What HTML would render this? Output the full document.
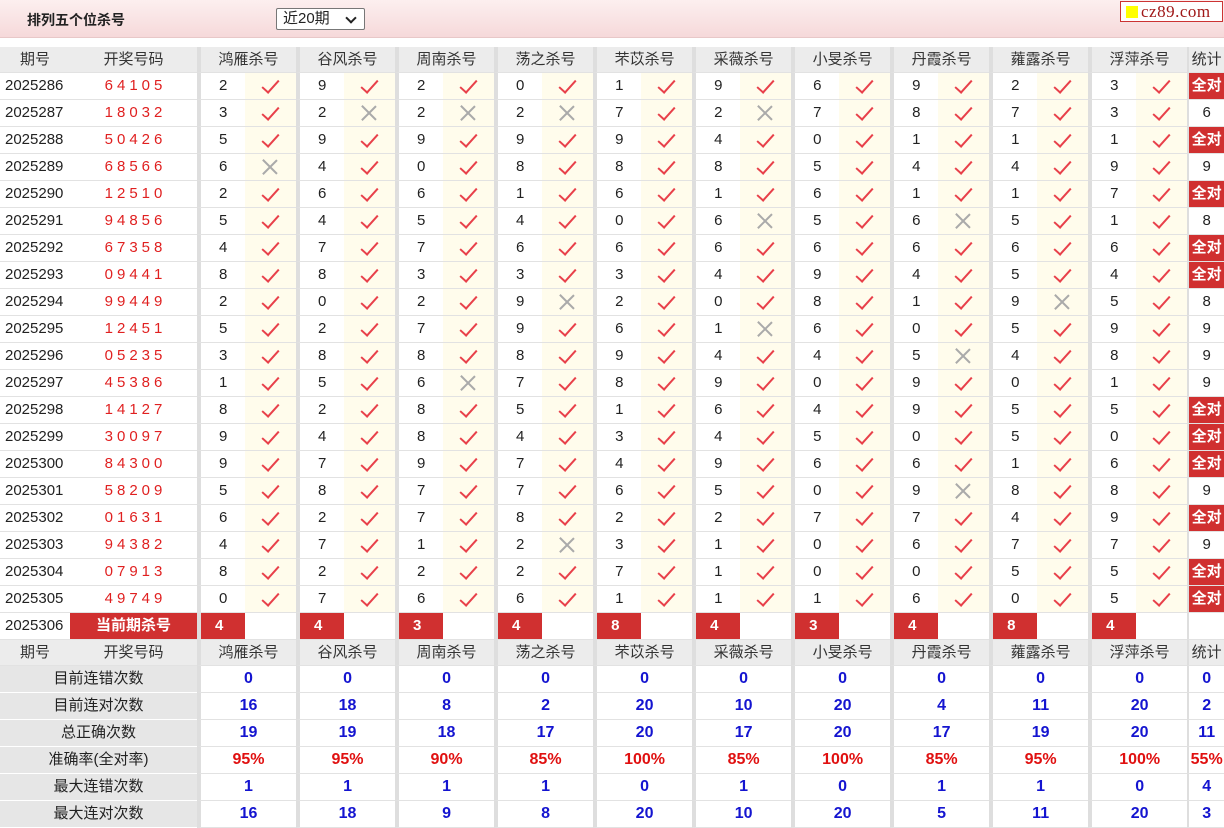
<!DOCTYPE html>
<html><head><meta charset="utf-8"><style>
*{margin:0;padding:0;box-sizing:border-box}
body{width:1224px;height:828px;overflow:hidden;background:#fff;font-family:"Liberation Sans","Noto Sans CJK SC",sans-serif;font-size:15px;color:#222;position:relative}
.bar{position:absolute;left:0;top:0;width:1224px;height:38px;background:linear-gradient(#fcefef,#f6d9da);border-bottom:1px solid #e8c8c8}
.tt{position:absolute;left:27px;top:10px;font-weight:bold;font-size:14px;color:#222}
.sel{position:absolute;left:276px;top:8px;width:89px;height:22px;border:1px solid #777;border-radius:2px;background:#fff;font-size:15px;padding-left:6px;line-height:20px}
.sel:after{content:"";position:absolute;right:9px;top:5px;width:6px;height:6px;border-right:2px solid #222;border-bottom:2px solid #222;transform:rotate(45deg)}
.logo{position:absolute;left:1120px;top:1px;width:103px;height:21px;border:1px solid #c33;background:#fff;font-family:"Liberation Serif",serif;font-size:17px;color:#a01818;line-height:19px;padding-left:20px;letter-spacing:.5px}
.logo:before{content:"";position:absolute;left:5px;top:4px;width:12px;height:12px;background:#ff0}
table{position:absolute;left:0;top:47px;border-collapse:separate;border-spacing:0;table-layout:fixed;width:1224px}
tr{height:27px}
tr.h{height:26px}
td{height:27px;border-bottom:1px solid #e2e2e2;text-align:center;white-space:nowrap;overflow:hidden;padding:0;line-height:26px}
tr.h td{background:#ececec;height:26px;color:#333;line-height:25px}
td.p{text-align:left;padding-left:5px}
tr.h td.p{text-align:center;padding:0}
td.k{color:#e02020;letter-spacing:4px;font-size:15px;padding-left:4px}
td.n{border-left:4px solid #dedede;text-align:left;padding-left:18px}
tr.h td.n{text-align:center;padding:0}
td.c{background:#fffcec;position:relative}
td.s{border-left:2px solid #dedede}
td.a{background:#d03030;color:#fff;font-weight:bold}
.y{position:absolute;left:21px;top:3px;width:9px;height:17px;border-right:2px solid #e8404a;border-bottom:2px solid #e8404a;transform:rotate(42deg)}
.x{position:absolute;left:17px;top:5px;width:16px;height:16px}
.x:before,.x:after{content:"";position:absolute;left:7px;top:-2px;width:1.5px;height:20px;background:#aaa;transform:rotate(45deg)}
.x:after{transform:rotate(-45deg)}
td.r{background:#d03030;color:#fff;font-weight:bold;text-align:left;padding-left:14px}
td.cu{background:#d03030;color:#fff;font-weight:bold;font-size:15px}
td.l{background:#e6e6e6;border-bottom:1px solid #fff}
td.v{border-left:4px solid #dedede;color:#1414d0;font-weight:bold;font-size:16px}
td.v.s{border-left:2px solid #dedede}
td.pc{color:#e01010}
</style></head><body>
<div class="bar"><div class="tt">排列五个位杀号</div><div class="sel">近20期</div><div class="logo">cz89.com</div></div>
<table>
<colgroup><col style="width:70px"><col style="width:127px">
<col style="width:48px"><col style="width:51px"><col style="width:48px"><col style="width:51px"><col style="width:48px"><col style="width:51px"><col style="width:48px"><col style="width:51px"><col style="width:48px"><col style="width:51px"><col style="width:48px"><col style="width:51px"><col style="width:48px"><col style="width:51px"><col style="width:48px"><col style="width:51px"><col style="width:48px"><col style="width:51px"><col style="width:48px"><col style="width:51px"><col style="width:37px"></colgroup>
<tr class="h"><td class="p">期号</td><td>开奖号码</td><td class="n" colspan="2">鸿雁杀号</td><td class="n" colspan="2">谷风杀号</td><td class="n" colspan="2">周南杀号</td><td class="n" colspan="2">荡之杀号</td><td class="n" colspan="2">芣苡杀号</td><td class="n" colspan="2">采薇杀号</td><td class="n" colspan="2">小旻杀号</td><td class="n" colspan="2">丹霞杀号</td><td class="n" colspan="2">蕹露杀号</td><td class="n" colspan="2">浮萍杀号</td><td class="s">统计</td></tr>
<tr><td class="p">2025286</td><td class="k">64105</td><td class="n">2</td><td class="c"><i class="y"></i></td><td class="n">9</td><td class="c"><i class="y"></i></td><td class="n">2</td><td class="c"><i class="y"></i></td><td class="n">0</td><td class="c"><i class="y"></i></td><td class="n">1</td><td class="c"><i class="y"></i></td><td class="n">9</td><td class="c"><i class="y"></i></td><td class="n">6</td><td class="c"><i class="y"></i></td><td class="n">9</td><td class="c"><i class="y"></i></td><td class="n">2</td><td class="c"><i class="y"></i></td><td class="n">3</td><td class="c"><i class="y"></i></td><td class="s a">全对</td></tr>
<tr><td class="p">2025287</td><td class="k">18032</td><td class="n">3</td><td class="c"><i class="y"></i></td><td class="n">2</td><td class="c"><i class="x"></i></td><td class="n">2</td><td class="c"><i class="x"></i></td><td class="n">2</td><td class="c"><i class="x"></i></td><td class="n">7</td><td class="c"><i class="y"></i></td><td class="n">2</td><td class="c"><i class="x"></i></td><td class="n">7</td><td class="c"><i class="y"></i></td><td class="n">8</td><td class="c"><i class="y"></i></td><td class="n">7</td><td class="c"><i class="y"></i></td><td class="n">3</td><td class="c"><i class="y"></i></td><td class="s">6</td></tr>
<tr><td class="p">2025288</td><td class="k">50426</td><td class="n">5</td><td class="c"><i class="y"></i></td><td class="n">9</td><td class="c"><i class="y"></i></td><td class="n">9</td><td class="c"><i class="y"></i></td><td class="n">9</td><td class="c"><i class="y"></i></td><td class="n">9</td><td class="c"><i class="y"></i></td><td class="n">4</td><td class="c"><i class="y"></i></td><td class="n">0</td><td class="c"><i class="y"></i></td><td class="n">1</td><td class="c"><i class="y"></i></td><td class="n">1</td><td class="c"><i class="y"></i></td><td class="n">1</td><td class="c"><i class="y"></i></td><td class="s a">全对</td></tr>
<tr><td class="p">2025289</td><td class="k">68566</td><td class="n">6</td><td class="c"><i class="x"></i></td><td class="n">4</td><td class="c"><i class="y"></i></td><td class="n">0</td><td class="c"><i class="y"></i></td><td class="n">8</td><td class="c"><i class="y"></i></td><td class="n">8</td><td class="c"><i class="y"></i></td><td class="n">8</td><td class="c"><i class="y"></i></td><td class="n">5</td><td class="c"><i class="y"></i></td><td class="n">4</td><td class="c"><i class="y"></i></td><td class="n">4</td><td class="c"><i class="y"></i></td><td class="n">9</td><td class="c"><i class="y"></i></td><td class="s">9</td></tr>
<tr><td class="p">2025290</td><td class="k">12510</td><td class="n">2</td><td class="c"><i class="y"></i></td><td class="n">6</td><td class="c"><i class="y"></i></td><td class="n">6</td><td class="c"><i class="y"></i></td><td class="n">1</td><td class="c"><i class="y"></i></td><td class="n">6</td><td class="c"><i class="y"></i></td><td class="n">1</td><td class="c"><i class="y"></i></td><td class="n">6</td><td class="c"><i class="y"></i></td><td class="n">1</td><td class="c"><i class="y"></i></td><td class="n">1</td><td class="c"><i class="y"></i></td><td class="n">7</td><td class="c"><i class="y"></i></td><td class="s a">全对</td></tr>
<tr><td class="p">2025291</td><td class="k">94856</td><td class="n">5</td><td class="c"><i class="y"></i></td><td class="n">4</td><td class="c"><i class="y"></i></td><td class="n">5</td><td class="c"><i class="y"></i></td><td class="n">4</td><td class="c"><i class="y"></i></td><td class="n">0</td><td class="c"><i class="y"></i></td><td class="n">6</td><td class="c"><i class="x"></i></td><td class="n">5</td><td class="c"><i class="y"></i></td><td class="n">6</td><td class="c"><i class="x"></i></td><td class="n">5</td><td class="c"><i class="y"></i></td><td class="n">1</td><td class="c"><i class="y"></i></td><td class="s">8</td></tr>
<tr><td class="p">2025292</td><td class="k">67358</td><td class="n">4</td><td class="c"><i class="y"></i></td><td class="n">7</td><td class="c"><i class="y"></i></td><td class="n">7</td><td class="c"><i class="y"></i></td><td class="n">6</td><td class="c"><i class="y"></i></td><td class="n">6</td><td class="c"><i class="y"></i></td><td class="n">6</td><td class="c"><i class="y"></i></td><td class="n">6</td><td class="c"><i class="y"></i></td><td class="n">6</td><td class="c"><i class="y"></i></td><td class="n">6</td><td class="c"><i class="y"></i></td><td class="n">6</td><td class="c"><i class="y"></i></td><td class="s a">全对</td></tr>
<tr><td class="p">2025293</td><td class="k">09441</td><td class="n">8</td><td class="c"><i class="y"></i></td><td class="n">8</td><td class="c"><i class="y"></i></td><td class="n">3</td><td class="c"><i class="y"></i></td><td class="n">3</td><td class="c"><i class="y"></i></td><td class="n">3</td><td class="c"><i class="y"></i></td><td class="n">4</td><td class="c"><i class="y"></i></td><td class="n">9</td><td class="c"><i class="y"></i></td><td class="n">4</td><td class="c"><i class="y"></i></td><td class="n">5</td><td class="c"><i class="y"></i></td><td class="n">4</td><td class="c"><i class="y"></i></td><td class="s a">全对</td></tr>
<tr><td class="p">2025294</td><td class="k">99449</td><td class="n">2</td><td class="c"><i class="y"></i></td><td class="n">0</td><td class="c"><i class="y"></i></td><td class="n">2</td><td class="c"><i class="y"></i></td><td class="n">9</td><td class="c"><i class="x"></i></td><td class="n">2</td><td class="c"><i class="y"></i></td><td class="n">0</td><td class="c"><i class="y"></i></td><td class="n">8</td><td class="c"><i class="y"></i></td><td class="n">1</td><td class="c"><i class="y"></i></td><td class="n">9</td><td class="c"><i class="x"></i></td><td class="n">5</td><td class="c"><i class="y"></i></td><td class="s">8</td></tr>
<tr><td class="p">2025295</td><td class="k">12451</td><td class="n">5</td><td class="c"><i class="y"></i></td><td class="n">2</td><td class="c"><i class="y"></i></td><td class="n">7</td><td class="c"><i class="y"></i></td><td class="n">9</td><td class="c"><i class="y"></i></td><td class="n">6</td><td class="c"><i class="y"></i></td><td class="n">1</td><td class="c"><i class="x"></i></td><td class="n">6</td><td class="c"><i class="y"></i></td><td class="n">0</td><td class="c"><i class="y"></i></td><td class="n">5</td><td class="c"><i class="y"></i></td><td class="n">9</td><td class="c"><i class="y"></i></td><td class="s">9</td></tr>
<tr><td class="p">2025296</td><td class="k">05235</td><td class="n">3</td><td class="c"><i class="y"></i></td><td class="n">8</td><td class="c"><i class="y"></i></td><td class="n">8</td><td class="c"><i class="y"></i></td><td class="n">8</td><td class="c"><i class="y"></i></td><td class="n">9</td><td class="c"><i class="y"></i></td><td class="n">4</td><td class="c"><i class="y"></i></td><td class="n">4</td><td class="c"><i class="y"></i></td><td class="n">5</td><td class="c"><i class="x"></i></td><td class="n">4</td><td class="c"><i class="y"></i></td><td class="n">8</td><td class="c"><i class="y"></i></td><td class="s">9</td></tr>
<tr><td class="p">2025297</td><td class="k">45386</td><td class="n">1</td><td class="c"><i class="y"></i></td><td class="n">5</td><td class="c"><i class="y"></i></td><td class="n">6</td><td class="c"><i class="x"></i></td><td class="n">7</td><td class="c"><i class="y"></i></td><td class="n">8</td><td class="c"><i class="y"></i></td><td class="n">9</td><td class="c"><i class="y"></i></td><td class="n">0</td><td class="c"><i class="y"></i></td><td class="n">9</td><td class="c"><i class="y"></i></td><td class="n">0</td><td class="c"><i class="y"></i></td><td class="n">1</td><td class="c"><i class="y"></i></td><td class="s">9</td></tr>
<tr><td class="p">2025298</td><td class="k">14127</td><td class="n">8</td><td class="c"><i class="y"></i></td><td class="n">2</td><td class="c"><i class="y"></i></td><td class="n">8</td><td class="c"><i class="y"></i></td><td class="n">5</td><td class="c"><i class="y"></i></td><td class="n">1</td><td class="c"><i class="y"></i></td><td class="n">6</td><td class="c"><i class="y"></i></td><td class="n">4</td><td class="c"><i class="y"></i></td><td class="n">9</td><td class="c"><i class="y"></i></td><td class="n">5</td><td class="c"><i class="y"></i></td><td class="n">5</td><td class="c"><i class="y"></i></td><td class="s a">全对</td></tr>
<tr><td class="p">2025299</td><td class="k">30097</td><td class="n">9</td><td class="c"><i class="y"></i></td><td class="n">4</td><td class="c"><i class="y"></i></td><td class="n">8</td><td class="c"><i class="y"></i></td><td class="n">4</td><td class="c"><i class="y"></i></td><td class="n">3</td><td class="c"><i class="y"></i></td><td class="n">4</td><td class="c"><i class="y"></i></td><td class="n">5</td><td class="c"><i class="y"></i></td><td class="n">0</td><td class="c"><i class="y"></i></td><td class="n">5</td><td class="c"><i class="y"></i></td><td class="n">0</td><td class="c"><i class="y"></i></td><td class="s a">全对</td></tr>
<tr><td class="p">2025300</td><td class="k">84300</td><td class="n">9</td><td class="c"><i class="y"></i></td><td class="n">7</td><td class="c"><i class="y"></i></td><td class="n">9</td><td class="c"><i class="y"></i></td><td class="n">7</td><td class="c"><i class="y"></i></td><td class="n">4</td><td class="c"><i class="y"></i></td><td class="n">9</td><td class="c"><i class="y"></i></td><td class="n">6</td><td class="c"><i class="y"></i></td><td class="n">6</td><td class="c"><i class="y"></i></td><td class="n">1</td><td class="c"><i class="y"></i></td><td class="n">6</td><td class="c"><i class="y"></i></td><td class="s a">全对</td></tr>
<tr><td class="p">2025301</td><td class="k">58209</td><td class="n">5</td><td class="c"><i class="y"></i></td><td class="n">8</td><td class="c"><i class="y"></i></td><td class="n">7</td><td class="c"><i class="y"></i></td><td class="n">7</td><td class="c"><i class="y"></i></td><td class="n">6</td><td class="c"><i class="y"></i></td><td class="n">5</td><td class="c"><i class="y"></i></td><td class="n">0</td><td class="c"><i class="y"></i></td><td class="n">9</td><td class="c"><i class="x"></i></td><td class="n">8</td><td class="c"><i class="y"></i></td><td class="n">8</td><td class="c"><i class="y"></i></td><td class="s">9</td></tr>
<tr><td class="p">2025302</td><td class="k">01631</td><td class="n">6</td><td class="c"><i class="y"></i></td><td class="n">2</td><td class="c"><i class="y"></i></td><td class="n">7</td><td class="c"><i class="y"></i></td><td class="n">8</td><td class="c"><i class="y"></i></td><td class="n">2</td><td class="c"><i class="y"></i></td><td class="n">2</td><td class="c"><i class="y"></i></td><td class="n">7</td><td class="c"><i class="y"></i></td><td class="n">7</td><td class="c"><i class="y"></i></td><td class="n">4</td><td class="c"><i class="y"></i></td><td class="n">9</td><td class="c"><i class="y"></i></td><td class="s a">全对</td></tr>
<tr><td class="p">2025303</td><td class="k">94382</td><td class="n">4</td><td class="c"><i class="y"></i></td><td class="n">7</td><td class="c"><i class="y"></i></td><td class="n">1</td><td class="c"><i class="y"></i></td><td class="n">2</td><td class="c"><i class="x"></i></td><td class="n">3</td><td class="c"><i class="y"></i></td><td class="n">1</td><td class="c"><i class="y"></i></td><td class="n">0</td><td class="c"><i class="y"></i></td><td class="n">6</td><td class="c"><i class="y"></i></td><td class="n">7</td><td class="c"><i class="y"></i></td><td class="n">7</td><td class="c"><i class="y"></i></td><td class="s">9</td></tr>
<tr><td class="p">2025304</td><td class="k">07913</td><td class="n">8</td><td class="c"><i class="y"></i></td><td class="n">2</td><td class="c"><i class="y"></i></td><td class="n">2</td><td class="c"><i class="y"></i></td><td class="n">2</td><td class="c"><i class="y"></i></td><td class="n">7</td><td class="c"><i class="y"></i></td><td class="n">1</td><td class="c"><i class="y"></i></td><td class="n">0</td><td class="c"><i class="y"></i></td><td class="n">0</td><td class="c"><i class="y"></i></td><td class="n">5</td><td class="c"><i class="y"></i></td><td class="n">5</td><td class="c"><i class="y"></i></td><td class="s a">全对</td></tr>
<tr><td class="p">2025305</td><td class="k">49749</td><td class="n">0</td><td class="c"><i class="y"></i></td><td class="n">7</td><td class="c"><i class="y"></i></td><td class="n">6</td><td class="c"><i class="y"></i></td><td class="n">6</td><td class="c"><i class="y"></i></td><td class="n">1</td><td class="c"><i class="y"></i></td><td class="n">1</td><td class="c"><i class="y"></i></td><td class="n">1</td><td class="c"><i class="y"></i></td><td class="n">6</td><td class="c"><i class="y"></i></td><td class="n">0</td><td class="c"><i class="y"></i></td><td class="n">5</td><td class="c"><i class="y"></i></td><td class="s a">全对</td></tr>
<tr><td class="p">2025306</td><td class="cu">当前期杀号</td><td class="n r">4</td><td></td><td class="n r">4</td><td></td><td class="n r">3</td><td></td><td class="n r">4</td><td></td><td class="n r">8</td><td></td><td class="n r">4</td><td></td><td class="n r">3</td><td></td><td class="n r">4</td><td></td><td class="n r">8</td><td></td><td class="n r">4</td><td></td><td class="s"></td></tr>
<tr class="h"><td class="p">期号</td><td>开奖号码</td><td class="n" colspan="2">鸿雁杀号</td><td class="n" colspan="2">谷风杀号</td><td class="n" colspan="2">周南杀号</td><td class="n" colspan="2">荡之杀号</td><td class="n" colspan="2">芣苡杀号</td><td class="n" colspan="2">采薇杀号</td><td class="n" colspan="2">小旻杀号</td><td class="n" colspan="2">丹霞杀号</td><td class="n" colspan="2">蕹露杀号</td><td class="n" colspan="2">浮萍杀号</td><td class="s">统计</td></tr>
<tr><td class="l" colspan="2">目前连错次数</td><td class="v" colspan="2">0</td><td class="v" colspan="2">0</td><td class="v" colspan="2">0</td><td class="v" colspan="2">0</td><td class="v" colspan="2">0</td><td class="v" colspan="2">0</td><td class="v" colspan="2">0</td><td class="v" colspan="2">0</td><td class="v" colspan="2">0</td><td class="v" colspan="2">0</td><td class="v s">0</td></tr>
<tr><td class="l" colspan="2">目前连对次数</td><td class="v" colspan="2">16</td><td class="v" colspan="2">18</td><td class="v" colspan="2">8</td><td class="v" colspan="2">2</td><td class="v" colspan="2">20</td><td class="v" colspan="2">10</td><td class="v" colspan="2">20</td><td class="v" colspan="2">4</td><td class="v" colspan="2">11</td><td class="v" colspan="2">20</td><td class="v s">2</td></tr>
<tr><td class="l" colspan="2">总正确次数</td><td class="v" colspan="2">19</td><td class="v" colspan="2">19</td><td class="v" colspan="2">18</td><td class="v" colspan="2">17</td><td class="v" colspan="2">20</td><td class="v" colspan="2">17</td><td class="v" colspan="2">20</td><td class="v" colspan="2">17</td><td class="v" colspan="2">19</td><td class="v" colspan="2">20</td><td class="v s">11</td></tr>
<tr><td class="l" colspan="2">准确率(全对率)</td><td class="v pc" colspan="2">95%</td><td class="v pc" colspan="2">95%</td><td class="v pc" colspan="2">90%</td><td class="v pc" colspan="2">85%</td><td class="v pc" colspan="2">100%</td><td class="v pc" colspan="2">85%</td><td class="v pc" colspan="2">100%</td><td class="v pc" colspan="2">85%</td><td class="v pc" colspan="2">95%</td><td class="v pc" colspan="2">100%</td><td class="v s pc">55%</td></tr>
<tr><td class="l" colspan="2">最大连错次数</td><td class="v" colspan="2">1</td><td class="v" colspan="2">1</td><td class="v" colspan="2">1</td><td class="v" colspan="2">1</td><td class="v" colspan="2">0</td><td class="v" colspan="2">1</td><td class="v" colspan="2">0</td><td class="v" colspan="2">1</td><td class="v" colspan="2">1</td><td class="v" colspan="2">0</td><td class="v s">4</td></tr>
<tr><td class="l" colspan="2">最大连对次数</td><td class="v" colspan="2">16</td><td class="v" colspan="2">18</td><td class="v" colspan="2">9</td><td class="v" colspan="2">8</td><td class="v" colspan="2">20</td><td class="v" colspan="2">10</td><td class="v" colspan="2">20</td><td class="v" colspan="2">5</td><td class="v" colspan="2">11</td><td class="v" colspan="2">20</td><td class="v s">3</td></tr>
</table>
</body></html>
